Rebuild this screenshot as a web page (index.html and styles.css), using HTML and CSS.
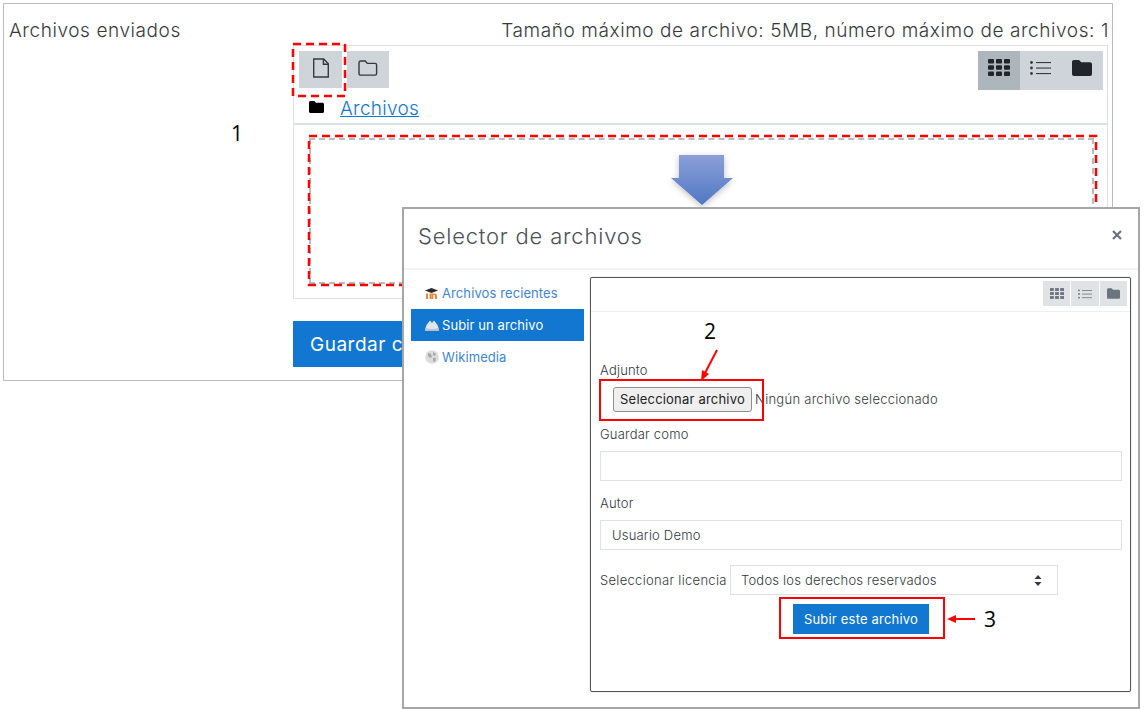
FILE: index.html
```html
<!DOCTYPE html>
<html lang="es">
<head>
    <meta charset="UTF-8">
    <meta name="viewport" content="width=device-width, initial-scale=1.0">
    <title>Archivos enviados</title>
    <link rel="stylesheet" href="styles.css">
</head>
<body>
    <div class="page">
        <!-- background form -->
        <section class="submission">
            <div class="submission-head">
                <span>Archivos enviados</span>
                <span>Tamaño máximo de archivo: 5MB, número máximo de archivos: 1</span>
            </div>

            <div class="picker">
                <div class="picker-toolbar">
                    <div class="picker-actions">
                        <button class="tool-btn file">
                            <svg width="18" height="20" viewBox="0 0 18 20" fill="none" stroke="#343a40" stroke-width="1.4"><path d="M1.7 1h10l4.6 4.8V19H1.7z"/><path d="M11.4 1v5.2h4.9"/></svg>
                        </button>
                        <button class="tool-btn">
                            <svg width="20" height="18" viewBox="0 0 20 18" fill="none" stroke="#343a40" stroke-width="1.4"><path d="M1 4c0-1.2.7-2 1.800-2h4.500l2 2.400h7.700c.9 0 1.600.7 1.600 1.600v8.500c0 1-.7 1.600-1.600 1.600H2.800C1.700 16.100 1 15.400 1 14.400z"/></svg>
                        </button>
                    </div>
                    <div class="view-group">
                        <span class="view-btn active">
                            <svg width="22" height="17" viewBox="0 0 22 17" fill="#212529"><rect x="0" y="0" width="6" height="4.500" rx="1"/><rect x="8" y="0" width="6" height="4.500" rx="1"/><rect x="16" y="0" width="6" height="4.500" rx="1"/><rect x="0" y="6.300" width="6" height="4.500" rx="1"/><rect x="8" y="6.300" width="6" height="4.500" rx="1"/><rect x="16" y="6.300" width="6" height="4.500" rx="1"/><rect x="0" y="12.500" width="6" height="4.500" rx="1"/><rect x="8" y="12.500" width="6" height="4.500" rx="1"/><rect x="16" y="12.500" width="6" height="4.500" rx="1"/></svg>
                        </span>
                        <span class="view-btn">
                            <svg width="21" height="14" viewBox="0 0 21 14" fill="#343a40"><circle cx="1.500" cy="1.500" r="1.400"/><circle cx="1.500" cy="7" r="1.400"/><circle cx="1.500" cy="12.500" r="1.400"/><rect x="6" y="1" width="15" height="1.100"/><rect x="6" y="6.500" width="15" height="1.100"/><rect x="6" y="12" width="15" height="1.100"/></svg>
                        </span>
                        <span class="view-btn">
                            <svg width="20" height="16" viewBox="0 0 20 16" fill="#212529"><path d="M0 2C0 .9.800 0 2 0h5l2.300 2.300H18c1.100 0 2 .9 2 2V14c0 1.100-.9 2-2 2H2c-1.200 0-2-.9-2-2z"/></svg>
                        </span>
                    </div>
                </div>
                <div class="breadcrumb">
                    <svg width="15" height="12" viewBox="0 0 20 16" fill="#000"><path d="M0 2C0 .9.800 0 2 0h5l2.300 2.300H18c1.100 0 2 .9 2 2V14c0 1.100-.9 2-2 2H2c-1.200 0-2-.9-2-2z"/></svg>
                    <a href="#">Archivos</a>
                </div>
                <div class="dropzone">
                    <p>Puede arrastrar y soltar archivos aquí para añadirlos o pulsar el botón para seleccionarlos. <a href="#">Repositorio</a></p>
                </div>
            </div>

            <button class="save-btn">Guardar c</button>
        </section>

        <!-- marks under the dialog -->
        <svg class="marks" width="1144" height="709" viewBox="0 0 1144 709">
            <g fill="none" stroke="#f00" stroke-width="2.500" stroke-dasharray="8 5">
                <rect x="293" y="44" width="52" height="52"/>
                <rect x="309" y="136" width="787" height="149"/>
            </g>
            <defs>
                <linearGradient id="arrow-fill" x1="0" y1="0" x2="0" y2="1">
                    <stop offset="0" stop-color="#8d9fd8"/>
                    <stop offset="1" stop-color="#4f78c4"/>
                </linearGradient>
                <filter id="arrow-shadow" x="-30%" y="-20%" width="160%" height="150%">
                    <feDropShadow dx="0" dy="2" stdDeviation="3" flood-color="#000" flood-opacity="0.25"/>
                </filter>
            </defs>
            <path d="M679 155h45v23h9l-31 27-31-27h8z" fill="url(#arrow-fill)" filter="url(#arrow-shadow)"/>
            <text class="mark-num" x="231" y="141">1</text>
        </svg>

        <!-- file picker dialog -->
        <div class="dialog">
            <div class="dialog-head">
                <h2>Selector de archivos</h2>
                <svg width="10" height="10" viewBox="0 0 10 10" stroke="#6a737b" stroke-width="2.200"><path d="M1 1l8 8M9 1l-8 8"/></svg>
            </div>
            <div class="dialog-body">
                <ul class="repo-list">
                    <li>
                        <svg width="14" height="12" viewBox="0 0 14 12"><path d="M1 12V6.500h2V12zM4.500 12V6.500h5c1.500 0 2.500 1 2.500 2.300V12h-2V9c0-.6-.3-1-.8-1H8.300v4h-2V8h-.2v4z" fill="#e8873a"/><path d="M0 3.500L6.500 1l6.500 2.500L6.500 6z" fill="#2b2b2b"/></svg>
                        Archivos recientes
                    </li>
                    <li class="active">
                        <svg width="14" height="12" viewBox="0 0 14 12"><path d="M0 11l1.500-5L5 1.500 7 4l2-2.500 3.500 4.500 1.500 5z" fill="#dfe6ee"/><path d="M0 12h14V8.500c-4 2-10 2-14 0z" fill="#b9c2cc"/></svg>
                        Subir un archivo
                    </li>
                    <li>
                        <svg width="14" height="14" viewBox="0 0 14 14"><circle cx="7" cy="7" r="6.800" fill="#dcdcdc"/><path d="M3 3l3 1 1 3-2 1-2-2zM8 2l3 2-1 2-2-1zM8 8l3 0-1 4-2-1z" fill="#a8a8a8"/></svg>
                        Wikimedia
                    </li>
                </ul>
                <div class="repo-panel">
                    <div class="repo-toolbar">
                        <div class="repo-views">
                            <span>
                                <svg width="14" height="11" viewBox="0 0 22 17" fill="#6c757d"><rect x="0" y="0" width="6" height="4.500"/><rect x="8" y="0" width="6" height="4.500"/><rect x="16" y="0" width="6" height="4.500"/><rect x="0" y="6.300" width="6" height="4.500"/><rect x="8" y="6.300" width="6" height="4.500"/><rect x="16" y="6.300" width="6" height="4.500"/><rect x="0" y="12.500" width="6" height="4.500"/><rect x="8" y="12.500" width="6" height="4.500"/><rect x="16" y="12.500" width="6" height="4.500"/></svg>
                            </span>
                            <span>
                                <svg width="14" height="10" viewBox="0 0 21 14" fill="#6c757d"><circle cx="1.500" cy="1.500" r="1.400"/><circle cx="1.500" cy="7" r="1.400"/><circle cx="1.500" cy="12.500" r="1.400"/><rect x="6" y="1" width="15" height="1.200"/><rect x="6" y="6.500" width="15" height="1.200"/><rect x="6" y="12" width="15" height="1.200"/></svg>
                            </span>
                            <span>
                                <svg width="13" height="11" viewBox="0 0 20 16" fill="#6c757d"><path d="M0 2C0 .9.800 0 2 0h5l2.300 2.300H18c1.100 0 2 .9 2 2V14c0 1.100-.9 2-2 2H2c-1.200 0-2-.9-2-2z"/></svg>
                            </span>
                        </div>
                    </div>
                    <form class="upload-form">
                        <label class="attach-label">Adjunto</label>
                        <div class="file-row">
                            <button type="button" class="file-btn">Seleccionar archivo</button>
                            <span>Ningún archivo seleccionado</span>
                        </div>
                        <label class="field-label">Guardar como</label>
                        <input class="field" type="text">
                        <label class="field-label">Autor</label>
                        <input class="field" type="text" value="Usuario Demo">
                        <div class="license-row">
                            <label>Seleccionar licencia</label>
                            <div class="select">
                                <span>Todos los derechos reservados</span>
                                <svg width="8" height="11" viewBox="0 0 8 11" fill="#343a40"><path d="M4 0l3.500 4H.5zM4 11L.5 7h7z"/></svg>
                            </div>
                        </div>
                        <button type="button" class="upload-btn">Subir este archivo</button>
                    </form>
                </div>
            </div>
        </div>

        <!-- marks over the dialog -->
        <svg class="marks" width="1144" height="709" viewBox="0 0 1144 709">
            <g fill="none" stroke="#f00" stroke-width="2">
                <rect x="600" y="380" width="163" height="40"/>
                <rect x="780" y="598" width="164" height="40"/>
                <path d="M717 350l-12 23"/>
                <path d="M950 619h25"/>
            </g>
            <path d="M701 381l1-11 7 4zM947 619l9-4v8z" fill="#f00"/>
            <text class="mark-num" x="704" y="339">2</text>
            <text class="mark-num" x="984" y="627">3</text>
        </svg>
    </div>
</body>
</html>
```

FILE: styles.css
```css
* {
    box-sizing: border-box;
}

body {
    margin: 0;
    background-color: #fff;
    color: #373a3c;
    font-family: 'Inter', sans-serif;
}

.page {
    position: relative;
    width: 1144px;
    height: 709px;
    overflow: hidden;
}

.marks {
    position: absolute;
    top: 0;
    left: 0;
}

.mark-num {
    font-family: 'Open Sans', sans-serif;
    font-size: 21px;
    fill: #000;
}

/* background form */
.submission {
    margin: 3px 0 0 3px;
    width: 1110px;
    height: 378px;
    border: 1px solid #bbb;
    padding: 12px 3px 0 5px;
}

.submission-head {
    display: flex;
    justify-content: space-between;
    height: 29px;
    font-size: 19px;
    font-weight: 300;
    letter-spacing: 0.58px;
    line-height: 29px;
}

.picker {
    display: flex;
    flex-direction: column;
    margin: 0 1px 0 284px;
    height: 254px;
    border: 1px solid #dee2e6;
}

.picker-toolbar {
    display: flex;
    justify-content: space-between;
    height: 50px;
    padding: 5px 4px 0 5px;
}

.picker-actions {
    display: flex;
    gap: 5px;
}

.tool-btn {
    display: flex;
    align-items: center;
    justify-content: center;
    width: 42px;
    height: 37px;
    padding: 0 0 4px;
    border: none;
    background-color: #ced4da;
}

.tool-btn.file {
    width: 43px;
}

.view-group {
    display: flex;
    height: 39px;
    background-color: #ced4da;
}

.view-btn {
    display: flex;
    align-items: center;
    justify-content: center;
    width: 41.700px;
    padding-bottom: 6px;
}

.view-btn.active {
    background-color: #adb5bd;
}

.breadcrumb {
    display: flex;
    align-items: center;
    gap: 16px;
    height: 29px;
    padding: 0 0 2px 15px;
    border-bottom: 2px solid #dee2e6;
    font-size: 19px;
    font-weight: 300;
    letter-spacing: 0.3px;
}

.breadcrumb svg {
    margin-bottom: 4px;
}

.breadcrumb a {
    color: #1177d1;
}

.dropzone {
    display: flex;
    justify-content: center;
    align-items: center;
    flex: 1;
    margin: 13px 13px 14px 15px;
    padding: 4px 0 0 110px;
    border: 2.500px dashed #bbb;
    overflow: hidden;
}

.dropzone p {
    margin: 0;
    font-size: 13.500px;
    letter-spacing: 0.2px;
    color: #555;
    white-space: nowrap;
}

.dropzone a {
    color: #1177d1;
}

.save-btn {
    display: block;
    margin: 22px 0 0 284px;
    width: 115px;
    height: 46px;
    padding: 0 0 0 17px;
    border: none;
    background-color: #1177d1;
    color: #fff;
    font-family: inherit;
    font-size: 19px;
    letter-spacing: 0.5px;
    text-align: left;
    white-space: nowrap;
}

/* dialog */
.dialog {
    position: absolute;
    top: 207px;
    left: 402px;
    width: 738px;
    height: 502px;
    display: flex;
    flex-direction: column;
    border: 2px solid #a6a6a6;
    background-color: #fff;
}

.dialog-head {
    display: flex;
    justify-content: space-between;
    height: 61px;
    padding: 9px 16px 0 14px;
    border-bottom: 2px solid #f3f3f3;
}

.dialog-head h2 {
    margin: 0;
    color: #4a5158;
    font-size: 22px;
    font-weight: 300;
    letter-spacing: 0.8px;
    line-height: 36px;
}

.dialog-head svg {
    margin-top: 12px;
}

.dialog-body {
    display: flex;
    flex: 1;
    padding: 7px 7px 15px 7px;
    gap: 6px;
}

.repo-list {
    width: 173px;
    margin: 0;
    padding: 0;
    list-style: none;
    font-size: 13px;
    letter-spacing: 0.1px;
    color: #3f85d3;
}

.repo-list li {
    display: flex;
    align-items: center;
    gap: 3px;
    height: 32px;
    padding-left: 14px;
}

.repo-list li.active {
    background-color: #1177d1;
    color: #fff;
}

.repo-panel {
    width: 541px;
    border: 1px solid #555;
    border-radius: 2px;
    box-shadow: 0 0 1px #777;
}

.repo-toolbar {
    display: flex;
    justify-content: flex-end;
    height: 34px;
    padding: 3px 3px 0 0;
    border-bottom: 1px solid #f0f0f0;
}

.repo-views {
    display: flex;
    gap: 1px;
    width: 84px;
    height: 25px;
}

.repo-views span {
    display: flex;
    flex: 1;
    align-items: center;
    justify-content: center;
    background-color: #e0e3e6;
}

.upload-form {
    padding: 48px 0 0 9px;
    font-size: 13px;
    letter-spacing: 0.2px;
    font-weight: 300;
    color: #33383d;
}

.upload-form label {
    display: block;
    height: 20px;
    line-height: 20px;
}

.file-row {
    display: flex;
    align-items: center;
    gap: 3px;
    margin: 7px 0 0 13px;
    letter-spacing: 0.27px;
}

.file-row span {
    margin-bottom: 1px;
}

.file-btn {
    width: 139px;
    height: 25px;
    padding: 0 0 1px;
    border: 1px solid #8f8f8f;
    border-radius: 3px;
    background-color: #efefef;
    color: #222;
    font-family: inherit;
    font-size: 13px;
    letter-spacing: 0.2px;
}

.upload-form .field-label {
    margin-top: 12px;
}

.field {
    display: block;
    width: 522px;
    height: 30px;
    margin-top: 7px;
    padding: 0 11px;
    border: 1px solid #dee2e6;
    color: #33383d;
    font-family: inherit;
    font-size: 13px;
    font-weight: 300;
    letter-spacing: 0.2px;
}

.license-row {
    display: flex;
    align-items: center;
    margin-top: 15px;
}

.license-row label {
    width: 130px;
    flex: none;
    letter-spacing: 0.3px;
}

.select {
    display: flex;
    align-items: center;
    justify-content: space-between;
    width: 328px;
    height: 30px;
    padding: 0 15px 0 10px;
    border: 1px solid #dee2e6;
}

.upload-btn {
    display: block;
    width: 136px;
    height: 30px;
    margin: 9px 0 0 193px;
    padding: 0;
    border: none;
    background-color: #1177d1;
    color: #fff;
    font-family: inherit;
    font-size: 13px;
    letter-spacing: 0.2px;
}
```
